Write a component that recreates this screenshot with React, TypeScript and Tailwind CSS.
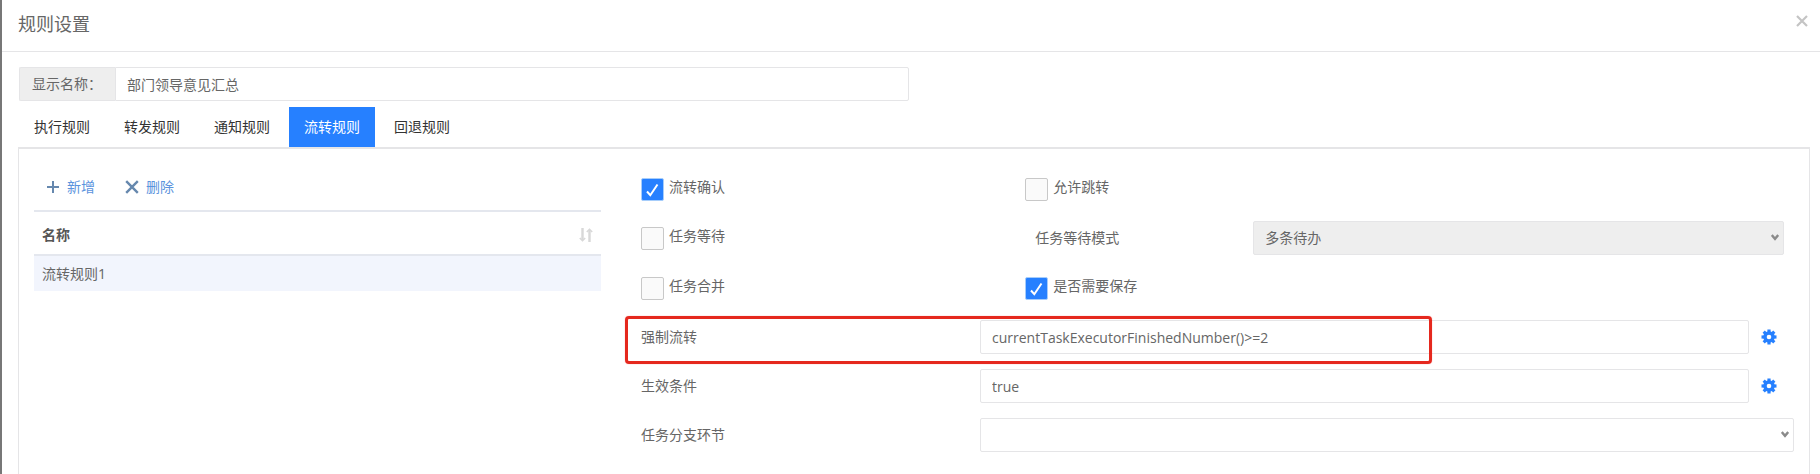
import { useState } from 'react';

const TABS = ['执行规则', '转发规则', '通知规则', '流转规则', '回退规则'];

const FIELD =
  'h-[34px] w-full min-w-0 rounded-xs border border-[#e5e5e7] px-[11px] text-[#666] outline-none';

type CheckFieldProps = {
  label: string;
  defaultChecked?: boolean;
};

const CheckField = ({ label, defaultChecked = false }: CheckFieldProps) => (
  <label className="flex items-start gap-[5px]">
    <span className="relative h-[23px] w-[23px] shrink-0">
      <input
        type="checkbox"
        defaultChecked={defaultChecked}
        className="peer block h-full w-full appearance-none rounded-xs border border-[#c8c8c8] bg-[#fafafa] checked:border-[#a6cdfb] checked:bg-[#2680ff]"
      />
      <svg
        viewBox="0 0 23 23"
        className="pointer-events-none absolute inset-0 hidden peer-checked:block"
        fill="none"
        stroke="#fff"
        strokeWidth="2"
      >
        <path d="M6 13.5 L9.3 17.2 L16.5 6.5" />
      </svg>
    </span>
    <span className="leading-[18px]">{label}</span>
  </label>
);

const Chevron = () => (
  <svg
    viewBox="0 0 8 7"
    className="pointer-events-none absolute top-[13px] right-[5px] h-[7px] w-2"
    fill="none"
    stroke="#8a8a8a"
    strokeWidth="2.4"
  >
    <path d="M0.8 1 L4 4.8 L7.2 1" />
  </svg>
);

const TEETH = [0, 45, 90, 135];

const Gear = () => (
  <svg viewBox="0 0 16 16" className="h-4 w-4">
    {TEETH.map((angle) => (
      <rect
        key={angle}
        x="6.4"
        y="0.5"
        width="3.2"
        height="15"
        fill="currentColor"
        transform={`rotate(${angle} 8 8)`}
      />
    ))}
    <circle cx="8" cy="8" r="5.8" fill="currentColor" />
    <circle cx="8" cy="8" r="2.3" fill="#fff" />
  </svg>
);

type ExpressionRowProps = {
  id: string;
  label: string;
  value: string;
  highlighted?: boolean;
};

const ExpressionRow = ({ id, label, value, highlighted }: ExpressionRowProps) => (
  <div className="relative grid grid-cols-[339fr_814fr] items-center">
    <label htmlFor={id}>{label}</label>
    <div className="flex items-center">
      <input id={id} type="text" defaultValue={value} className={`${FIELD} bg-white`} />
      <button type="button" aria-label="设置" className="w-[45px] shrink-0 pl-3 text-[#2680ff]">
        <Gear />
      </button>
    </div>
    {highlighted && (
      <div className="pointer-events-none absolute -top-1 -left-4 h-12 w-[70%] rounded-sm border-3 border-[#e5281e] shadow-[0_0_1px_#f87171]" />
    )}
  </div>
);

export default function App() {
  const [activeTab, setActiveTab] = useState('流转规则');

  return (
    <main className="flex min-h-screen flex-col border-l-2 border-[#777] bg-white font-['Open_Sans','Noto_Sans_CJK_SC',sans-serif] text-sm text-[#666]">
      {/* Header */}
      <header className="flex h-[52px] items-start justify-between border-b border-[#e5e5e7] pr-3 pl-4">
        <h1 className="pt-2.5 text-lg leading-7">规则设置</h1>
        <button type="button" aria-label="关闭" className="pt-[15px]">
          <svg viewBox="0 0 12 12" className="h-3 w-3" stroke="#c4c4c4" strokeWidth="2.2">
            <path d="M1 1 L11 11 M11 1 L1 11" />
          </svg>
        </button>
      </header>

      <div className="flex flex-1 flex-col pt-[15px] pr-2.5 pl-4">
        {/* Display name */}
        <div className="flex w-1/2 pr-[5px] pl-px">
          <label
            htmlFor="display-name"
            className="flex h-[34px] w-24 shrink-0 items-center rounded-l-xs border border-r-0 border-[#e5e5e7] bg-[#eee] pl-3"
          >
            显示名称：
          </label>
          <input
            id="display-name"
            type="text"
            defaultValue="部门领导意见汇总"
            className={`${FIELD} rounded-l-none bg-white`}
          />
        </div>

        {/* Tabs */}
        <nav className="mt-1.5 flex gap-1 border-b border-[#e5e5e7] pl-px">
          {TABS.map((tab) => (
            <button
              key={tab}
              type="button"
              onClick={() => setActiveTab(tab)}
              className={`h-10 px-[15px] ${
                activeTab === tab ? 'bg-[#2680ff] text-white' : 'text-[#333]'
              }`}
            >
              {tab}
            </button>
          ))}
        </nav>

        <section className="grid flex-1 grid-cols-[567fr_1153fr] gap-10 border border-b-0 border-[#e5e5e7] px-[15px]">
          {/* Rule list */}
          <div>
            <div className="flex h-[61px] items-center gap-[30px] pt-[15px] pl-3 text-[#5b93dd]">
              <button type="button" className="flex items-center gap-[7px]">
                <svg viewBox="0 0 14 14" className="h-3.5 w-3.5" stroke="#6688ae" strokeWidth="2">
                  <path d="M7 1 V13 M1 7 H13" />
                </svg>
                新增
              </button>
              <button type="button" className="flex items-center gap-[7px]">
                <svg viewBox="0 0 14 14" className="h-3.5 w-3.5" stroke="#6688ae" strokeWidth="2.4">
                  <path d="M1.2 1.2 L12.8 12.8 M12.8 1.2 L1.2 12.8" />
                </svg>
                删除
              </button>
            </div>
            <table className="w-full">
              <thead>
                <tr className="h-11 border-y-2 border-[#e4e7ee]">
                  <th className="px-2 pt-1 text-left font-bold text-[#555]">
                    <div className="flex items-center justify-between">
                      名称
                      <svg
                        viewBox="0 0 14 14"
                        className="h-3.5 w-3.5"
                        fill="none"
                        stroke="#d8d8d8"
                        strokeWidth="2.4"
                      >
                        <path d="M3.5 0 V12 M10.5 14 V2" />
                        <path d="M0.8 10 L3.5 12.7 L6.2 10 M7.8 4 L10.5 1.3 L13.2 4" strokeWidth="1.6" />
                      </svg>
                    </div>
                  </th>
                </tr>
              </thead>
              <tbody>
                <tr className="h-9 bg-[#f2f5fd]">
                  <td className="px-2">流转规则1</td>
                </tr>
              </tbody>
            </table>
          </div>

          {/* Rule form */}
          <form className="flex flex-col pt-[29px]">
            <div className="grid h-[49px] grid-cols-[1fr_2fr]">
              <CheckField label="流转确认" defaultChecked />
              <CheckField label="允许跳转" />
            </div>
            <div className="grid h-[50px] grid-cols-[1fr_2fr]">
              <CheckField label="任务等待" />
              <div className="-mt-1.5 grid h-[34px] grid-cols-[218fr_531fr] items-center px-2.5">
                <label htmlFor="wait-mode">任务等待模式</label>
                <div className="relative">
                  <select
                    id="wait-mode"
                    disabled
                    className={`${FIELD} appearance-none bg-[#eee] opacity-100`}
                  >
                    <option>多条待办</option>
                  </select>
                  <Chevron />
                </div>
              </div>
            </div>
            <div className="grid h-[43px] grid-cols-[1fr_2fr]">
              <CheckField label="任务合并" />
              <CheckField label="是否需要保存" defaultChecked />
            </div>

            <div className="flex flex-col gap-[15px]">
              <ExpressionRow
                id="force-flow"
                label="强制流转"
                value="currentTaskExecutorFinishedNumber()>=2"
                highlighted
              />
              <ExpressionRow id="condition" label="生效条件" value="true" />
              <div className="grid grid-cols-[339fr_814fr] items-center">
                <label htmlFor="branch">任务分支环节</label>
                <div className="relative">
                  <select id="branch" className={`${FIELD} appearance-none bg-white`}>
                    <option></option>
                  </select>
                  <Chevron />
                </div>
              </div>
            </div>
          </form>
        </section>
      </div>
    </main>
  );
}
